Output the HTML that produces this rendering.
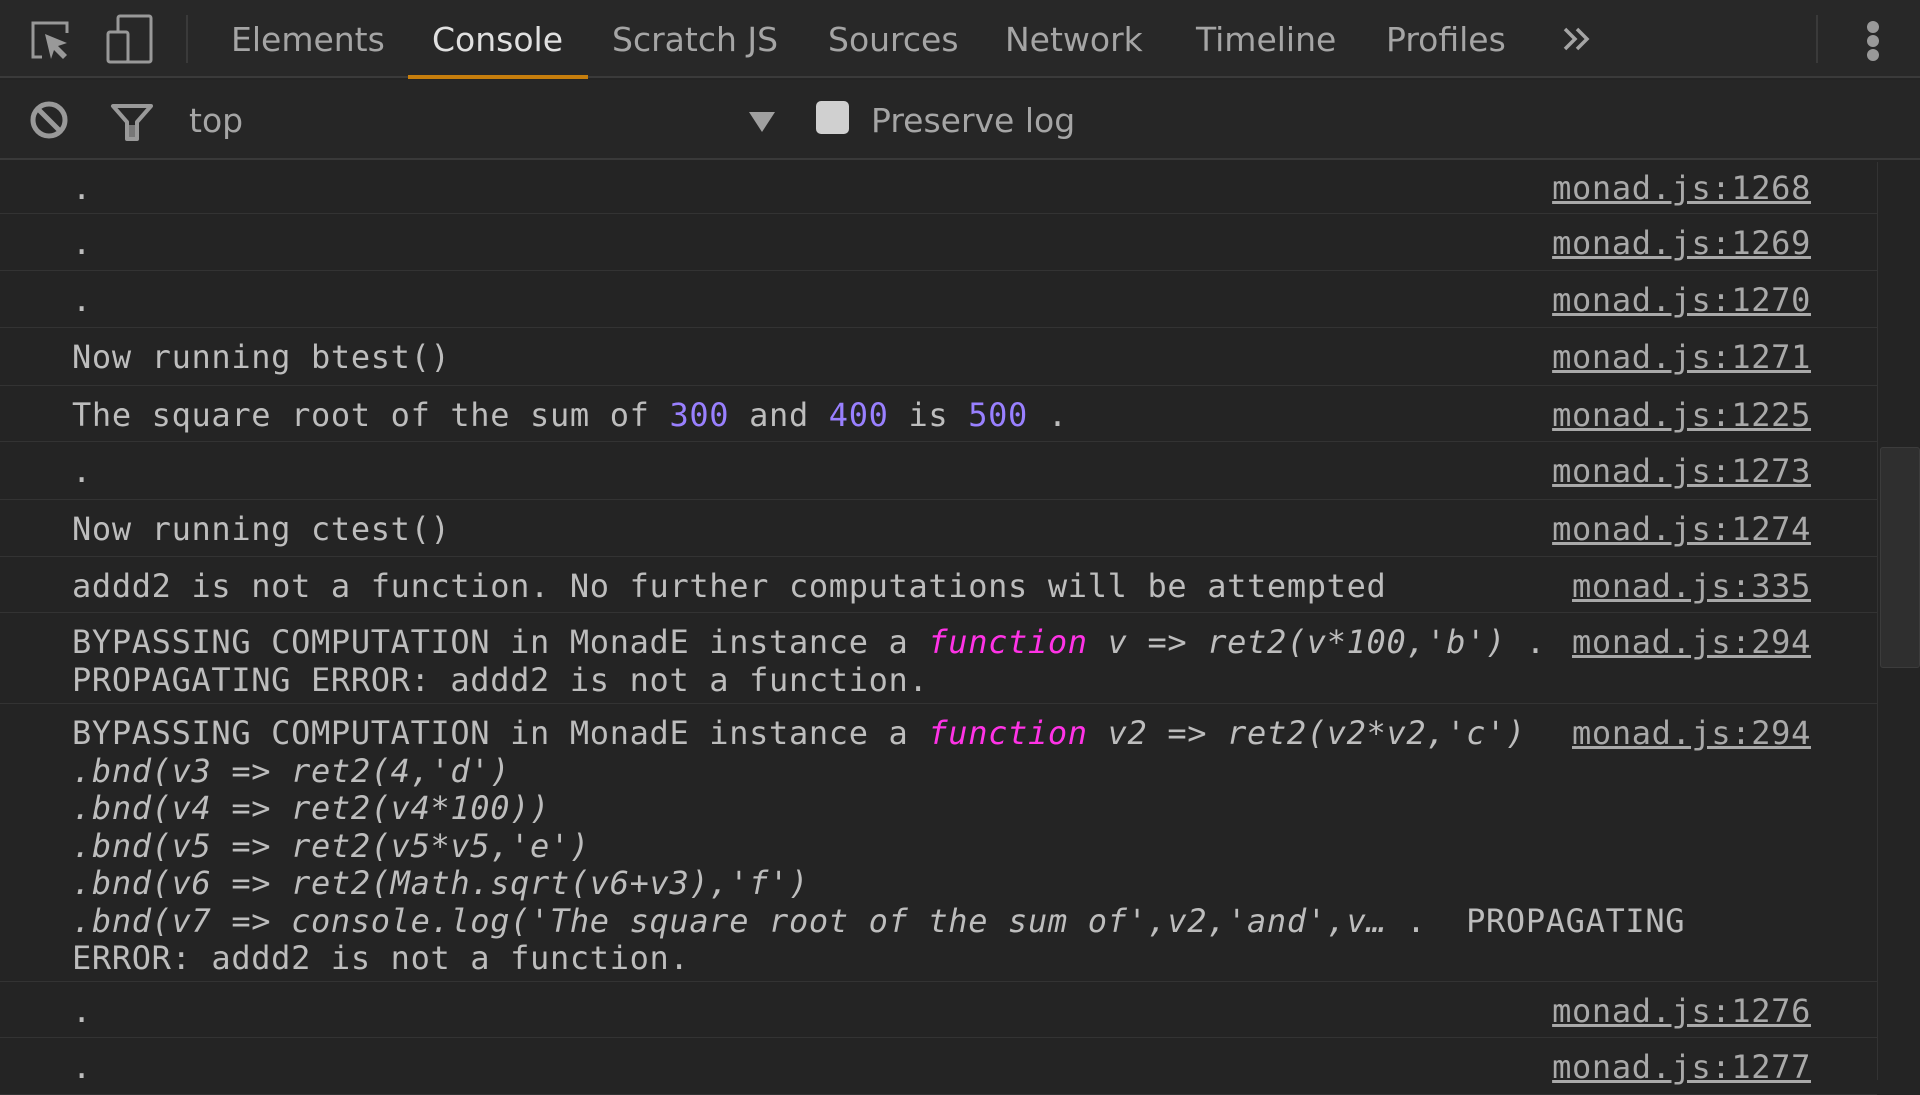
<!DOCTYPE html>
<html><head><meta charset="utf-8"><style>
*{margin:0;padding:0;box-sizing:border-box}
body{width:1920px;height:1080px;background:#242424;overflow:hidden;position:relative;font-family:"DejaVu Sans Mono","Liberation Mono",monospace;color:#bdbdbd}
.tb1{position:absolute;left:0;top:0;width:1920px;height:78px;background:#282828;border-bottom:2px solid #3a3a3a}
.tab{position:absolute;top:20px;font-family:"DejaVu Sans","Liberation Sans",sans-serif;font-size:33px;color:#a5a5a5}
.tb2{position:absolute;left:0;top:80px;width:1920px;height:80px;background:#262626;border-bottom:2px solid #393939}
.row{position:absolute;left:0;width:1877px;border-bottom:1px solid #333;font-size:32px;line-height:37.5px;letter-spacing:0.65px}
.row .t{position:absolute;left:72px;top:11px;white-space:pre}
.row .l{position:absolute;right:66px;top:11px;text-decoration:underline;color:#a9a9a9}
.n{color:#9980ff}.f{color:#ff33e6;font-style:italic}.i{font-style:italic}
</style></head><body>
<div class="tb1">
<svg style="position:absolute;left:28px;top:20px" width="46" height="44" viewBox="0 0 46 44"><path d="M14 37H5V3h34v10" fill="none" stroke="#999" stroke-width="3"/><path d="M17 14l22 9-9 3 9 9-4 4-9-9-3 9z" fill="#999"/></svg>
<svg style="position:absolute;left:106px;top:14px" width="48" height="50" viewBox="0 0 48 50"><rect x="12" y="2" width="33" height="46" rx="2" fill="none" stroke="#999" stroke-width="3"/><rect x="2" y="18" width="20" height="30" rx="2" fill="#282828" stroke="#999" stroke-width="3"/></svg>
<div style="position:absolute;left:186px;top:15px;width:2px;height:48px;background:#3a3a3a"></div>
<div class="tab" style="left:231px">Elements</div>
<div class="tab" style="left:432px;color:#e0e0e0">Console</div>
<div style="position:absolute;left:408px;top:75px;width:180px;height:4px;background:#c67e0d"></div>
<div class="tab" style="left:612px">Scratch JS</div>
<div class="tab" style="left:828px">Sources</div>
<div class="tab" style="left:1005px">Network</div>
<div class="tab" style="left:1196px">Timeline</div>
<div class="tab" style="left:1386px">Profiles</div>
<svg style="position:absolute;left:1562px;top:26px" width="30" height="26" viewBox="0 0 30 26"><path d="M3 3l10 10-10 10M15 3l10 10-10 10" fill="none" stroke="#a5a5a5" stroke-width="3.5"/></svg>
<div style="position:absolute;left:1816px;top:15px;width:2px;height:48px;background:#3a3a3a"></div>
<div style="position:absolute;left:1867px;top:21px;width:12px;height:12px;border-radius:6px;background:#999"></div>
<div style="position:absolute;left:1867px;top:35px;width:12px;height:12px;border-radius:6px;background:#999"></div>
<div style="position:absolute;left:1867px;top:49px;width:12px;height:12px;border-radius:6px;background:#999"></div>
</div>
<div class="tb2">
<svg style="position:absolute;left:29px;top:20px" width="40" height="40" viewBox="0 0 40 40"><circle cx="20" cy="20" r="16" fill="none" stroke="#999" stroke-width="5"/><path d="M9 9l22 22" stroke="#999" stroke-width="5"/></svg>
<svg style="position:absolute;left:110px;top:23px" width="44" height="38" viewBox="0 0 44 38"><path d="M3 3h38L27 19v17H17V19z" fill="none" stroke="#999" stroke-width="4" stroke-linejoin="round"/><path d="M19 22h6v12h-6z" fill="#777"/></svg>
<div style="position:absolute;left:189px;top:21px;font-family:'DejaVu Sans',sans-serif;font-size:33px;color:#a5a5a5">top</div>
<svg style="position:absolute;left:749px;top:32px" width="26" height="20"><path d="M0 0h26L13 20z" fill="#a0a0a0"/></svg>
<div style="position:absolute;left:816px;top:21px;width:33px;height:33px;border-radius:5px;background:#d0d0d0"></div>
<div style="position:absolute;left:871px;top:21px;font-family:'DejaVu Sans',sans-serif;font-size:33px;color:#a5a5a5">Preserve log</div>
</div>
<div style="position:absolute;left:1877px;top:162px;width:43px;height:918px;background:#242424;border-left:1px solid #333"></div>
<div style="position:absolute;left:1880px;top:447px;width:40px;height:221px;background:#2f2f2f;border:1px solid #3c3c3c;border-radius:3px"></div>

<div class="row" style="top:162px;height:52px"><span class="t" style="top:8px">.</span><span class="l" style="top:8px">monad.js:1268</span></div>
<div class="row" style="top:214px;height:57px"><span class="t">.</span><span class="l">monad.js:1269</span></div>
<div class="row" style="top:271px;height:57px"><span class="t">.</span><span class="l">monad.js:1270</span></div>
<div class="row" style="top:328px;height:58px"><span class="t">Now running btest()</span><span class="l">monad.js:1271</span></div>
<div class="row" style="top:386px;height:56px"><span class="t">The square root of the sum of <span class="n">300</span> and <span class="n">400</span> is <span class="n">500</span> .</span><span class="l">monad.js:1225</span></div>
<div class="row" style="top:442px;height:58px"><span class="t">.</span><span class="l">monad.js:1273</span></div>
<div class="row" style="top:500px;height:57px"><span class="t">Now running ctest()</span><span class="l">monad.js:1274</span></div>
<div class="row" style="top:557px;height:56px"><span class="t">addd2 is not a function. No further computations will be attempted</span><span class="l">monad.js:335</span></div>
<div class="row" style="top:613px;height:91px"><span class="t">BYPASSING COMPUTATION in MonadE instance a <span class="f">function</span> <span class="i">v =&gt; ret2(v*100,'b')</span> .
PROPAGATING ERROR: addd2 is not a function.</span><span class="l">monad.js:294</span></div>
<div class="row" style="top:704px;height:278px"><span class="t">BYPASSING COMPUTATION in MonadE instance a <span class="f">function</span> <span class="i">v2 =&gt; ret2(v2*v2,'c')</span>
<span class="i">.bnd(v3 =&gt; ret2(4,'d')
.bnd(v4 =&gt; ret2(v4*100))
.bnd(v5 =&gt; ret2(v5*v5,'e')
.bnd(v6 =&gt; ret2(Math.sqrt(v6+v3),'f')
.bnd(v7 =&gt; console.log('The square root of the sum of',v2,'and',v…</span> .  PROPAGATING
ERROR: addd2 is not a function.</span><span class="l">monad.js:294</span></div>
<div class="row" style="top:982px;height:56px"><span class="t">.</span><span class="l">monad.js:1276</span></div>
<div class="row" style="top:1038px;height:57px"><span class="t">.</span><span class="l">monad.js:1277</span></div>
</body></html>
